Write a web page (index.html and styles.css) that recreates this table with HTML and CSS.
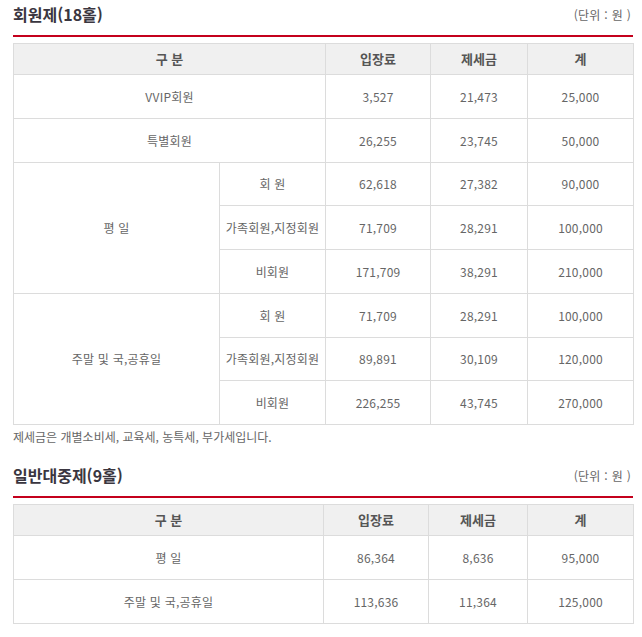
FILE: index.html
```html
<!DOCTYPE html>
<html lang="ko">
<head>
<meta charset="utf-8">
<link rel="stylesheet" href="styles.css">
</head>
<body>
<div class="page">
  <section class="sec">
    <div class="head">
      <h2 class="title">회원제(18홀)</h2>
      <span class="unit">(단위 : 원 )</span>
    </div>
    <table class="fee fee-a">
      <colgroup>
        <col class="c1"><col class="c2"><col class="c3"><col class="c4"><col class="c5">
      </colgroup>
      <thead>
        <tr><th colspan="2">구 분</th><th>입장료</th><th>제세금</th><th>계</th></tr>
      </thead>
      <tbody>
        <tr><td colspan="2">VVIP회원</td><td>3,527</td><td>21,473</td><td>25,000</td></tr>
        <tr><td colspan="2">특별회원</td><td>26,255</td><td>23,745</td><td>50,000</td></tr>
        <tr><td rowspan="3">평 일</td><td>회 원</td><td>62,618</td><td>27,382</td><td>90,000</td></tr>
        <tr><td>가족회원,지정회원</td><td>71,709</td><td>28,291</td><td>100,000</td></tr>
        <tr><td>비회원</td><td>171,709</td><td>38,291</td><td>210,000</td></tr>
        <tr><td rowspan="3">주말 및 국,공휴일</td><td>회 원</td><td>71,709</td><td>28,291</td><td>100,000</td></tr>
        <tr><td>가족회원,지정회원</td><td>89,891</td><td>30,109</td><td>120,000</td></tr>
        <tr><td>비회원</td><td>226,255</td><td>43,745</td><td>270,000</td></tr>
      </tbody>
    </table>
    <p class="note">제세금은 개별소비세, 교육세, 농특세, 부가세입니다.</p>
  </section>
  <section class="sec">
    <div class="head">
      <h2 class="title">일반대중제(9홀)</h2>
      <span class="unit">(단위 : 원 )</span>
    </div>
    <table class="fee fee-b">
      <colgroup>
        <col class="d1"><col class="d2"><col class="d3"><col class="d4">
      </colgroup>
      <thead>
        <tr><th>구 분</th><th>입장료</th><th>제세금</th><th>계</th></tr>
      </thead>
      <tbody>
        <tr><td>평 일</td><td>86,364</td><td>8,636</td><td>95,000</td></tr>
        <tr><td>주말 및 국,공휴일</td><td>113,636</td><td>11,364</td><td>125,000</td></tr>
      </tbody>
    </table>
  </section>
</div>
</body>
</html>
```

FILE: styles.css
```css
html, body {
  margin: 0;
  padding: 0;
  background: #fff;
}
body {
  font-family: "Noto Sans CJK KR", "Noto Sans", sans-serif;
  color: #666;
}
.page {
  width: 620px;
  margin-left: 13px;
}
.head {
  display: flex;
  justify-content: space-between;
  align-items: flex-start;
  height: 35px;
  border-bottom: 2px solid #c4001c;
  margin-bottom: 6px;
  box-sizing: content-box;
}
.title {
  margin: 0;
  font-size: 16px;
  line-height: 29px;
  font-weight: bold;
  color: #3a3640;
}
.unit {
  font-size: 12px;
  line-height: 29px;
  color: #666;
  padding-right: 2px;
  letter-spacing: 0.3px;
}
.fee {
  width: 620px;
  border-collapse: collapse;
  table-layout: fixed;
}
.fee th, .fee td {
  border: 1px solid #dcdcdc;
  text-align: center;
  vertical-align: middle;
  padding: 0;
  font-size: 12px;
  white-space: nowrap;
}
.fee td {
  letter-spacing: 0.2px;
}
.fee th {
  background: #f0f0f0;
  color: #555;
  font-weight: bold;
  font-size: 13px;
  height: 28px;
  padding-bottom: 2px;
}
.fee-a td {
  height: 42.75px;
}
.fee-b td {
  height: 43px;
}
.c1 { width: 206px; }
.c2 { width: 106px; }
.c3 { width: 105px; }
.c4 { width: 97px; }
.c5 { width: 106px; }
.d1 { width: 310px; }
.d2 { width: 105px; }
.d3 { width: 99px; }
.d4 { width: 106px; }
.note {
  margin: 3px 0 15px;
  font-size: 12px;
  line-height: 18px;
  color: #666;
}
```
